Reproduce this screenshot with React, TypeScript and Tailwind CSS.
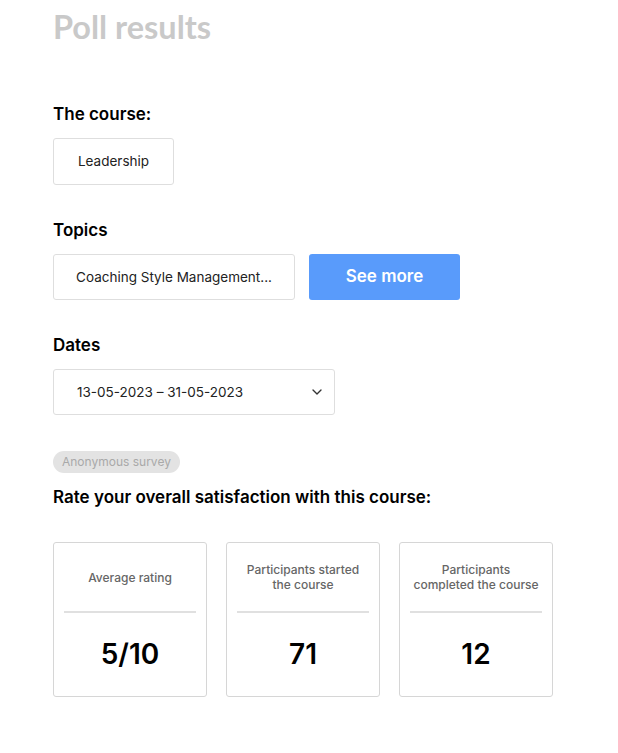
import { ChevronDown } from 'lucide-react';

const stats = [
  { label: 'Average rating', value: '5/10' },
  { label: 'Participants started the course', value: '71' },
  { label: 'Participants completed the course', value: '12' },
];

function Label({ children }: { children: React.ReactNode }) {
  return <h2 className="text-[17px] font-semibold text-black leading-none">{children}</h2>;
}

export default function App() {
  return (
    <div className="min-h-screen bg-white pl-[53px] pt-[11px] font-['Inter',sans-serif] text-black">
      <h1 className="font-['Lato',sans-serif] text-[32.5px] font-bold leading-[32px] text-[#c9c9c9]">Poll results</h1>

      <div className="mt-[63px]">
        <Label>The course:</Label>
        <div className="mt-[15px] flex h-[47px] w-[121px] items-center justify-center rounded-[3px] border border-[#dedede] text-[13.5px] text-[#222]">
          Leadership
        </div>
      </div>

      <div className="mt-[37px]">
        <Label>Topics</Label>
        <div className="mt-[15px] flex gap-[14px]">
          <div className="flex h-[46px] w-[242px] items-center justify-center rounded-[3px] border border-[#dedede] text-[13.5px] text-[#222]">
            Coaching Style Management...
          </div>
          <button className="h-[46px] w-[151px] rounded-[3px] bg-[#599bfb] text-[17px] font-semibold text-white">
            See more
          </button>
        </div>
      </div>

      <div className="mt-[37px]">
        <Label>Dates</Label>
        <div className="mt-[15px] flex h-[46px] w-[282px] items-center justify-between rounded-[3px] border border-[#dedede] pl-[23px] pr-[9px] text-[13.5px] text-[#222]">
          <span>13-05-2023 – 31-05-2023</span>
          <ChevronDown size={16} strokeWidth={2} className="text-[#333]" />
        </div>
      </div>

      <div className="mt-[36px] inline-flex h-[22px] items-center rounded-full bg-[#e3e3e3] px-[9px] text-[12px] text-[#a9a9a9]">
        Anonymous survey
      </div>

      <div className="mt-[16px]">
        <Label>Rate your overall satisfaction with this course:</Label>
      </div>

      <div className="mt-[36px] flex gap-[19px]">
        {stats.map((s) => (
          <div
            key={s.label}
            className="flex h-[155px] w-[154px] flex-col items-center rounded-[3px] border border-[#d6d6d6] px-[10px]"
          >
            <div className="flex h-[70px] w-full items-center justify-center border-b-2 border-[#e0e0e0] px-[2px] text-center text-[12px] font-medium leading-[15px] text-[#666]">
              {s.label}
            </div>
            <div className="mt-[27px] text-[28px] font-semibold leading-none text-black">{s.value}</div>
          </div>
        ))}
      </div>
    </div>
  );
}
